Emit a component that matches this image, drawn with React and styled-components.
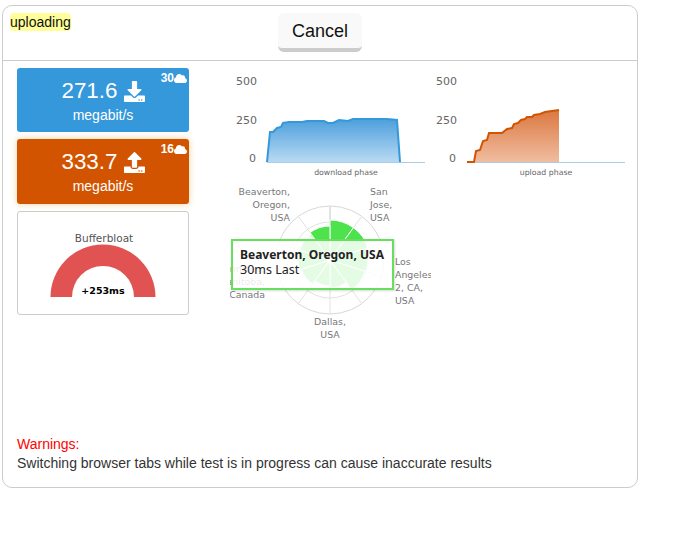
import React from 'react';
import styled, { createGlobalStyle } from 'styled-components';
import { FaDownload, FaUpload, FaCloud } from 'react-icons/fa';

const GlobalStyle = createGlobalStyle`
  body {
    margin: 0;
    background: #fff;
    font-family: 'Liberation Sans', Arial, sans-serif;
    font-size: 14px;
    color: #333;
  }
`;

const chartFont = "'DejaVu Sans', Verdana, sans-serif";

const Panel = styled.div`
  box-sizing: border-box;
  width: 636px;
  height: 483px;
  margin: 5px 0 0 2px;
  border: 1px solid #ccc;
  border-radius: 10px;
  display: flex;
  flex-direction: column;
`;

const Header = styled.header`
  box-sizing: border-box;
  height: 55px;
  flex: none;
  padding: 7px 7px 0;
  border-bottom: 1px solid #ccc;
  display: grid;
  grid-template-columns: 1fr auto 1fr;
  align-items: start;
`;

const Status = styled.span`
  justify-self: start;
  background: #ffff99;
  border-radius: 4px;
  line-height: 18px;
  color: #111;
`;

const CancelButton = styled.button`
  box-sizing: border-box;
  width: 84px;
  height: 39px;
  border: none;
  border-bottom: 4px solid #ccc;
  border-radius: 6px;
  background: #f9f9f9;
  font-family: inherit;
  font-size: 18px;
  color: #111;
  padding: 2px 0 0;
`;

const Body = styled.main`
  display: flex;
  gap: 41px;
  padding: 7px 0 0 14px;
`;

const LeftColumn = styled.div`
  width: 172px;
  flex: none;
  display: flex;
  flex-direction: column;
  gap: 7px;
`;

const SpeedTile = styled.div`
  position: relative;
  height: ${props => props.$height}px;
  border-radius: 3px;
  background: ${props => props.$color};
  box-shadow: ${props => props.$glow ? '0 0 6px rgba(232, 190, 110, 0.7)' : 'none'};
  color: #fff;
  display: flex;
  flex-direction: column;
  align-items: center;
  padding-top: 10px;
  box-sizing: border-box;
`;

const SpeedRow = styled.div`
  display: flex;
  align-items: center;
  gap: 6px;
  font-size: 22.4px;
  line-height: 26px;
`;

const SpeedUnit = styled.div`
  line-height: 20px;
  margin-top: 1px;
`;

const StreamCount = styled.div`
  position: absolute;
  top: 3px;
  right: 2px;
  display: flex;
  align-items: center;
  font-size: 12px;
  font-weight: bold;
  line-height: 14px;
`;

const GaugeCard = styled.div`
  box-sizing: border-box;
  height: 104px;
  border: 1px solid #ccc;
  border-radius: 3px;
`;

const Drawing = styled.svg`
  display: block;
`;

const ChartsColumn = styled.div`
  display: flex;
  flex-direction: column;
  width: 400px;
`;

const ChartsRow = styled.div`
  display: flex;
`;

const RadarWrap = styled.div`
  position: relative;
  width: 201px;
  height: 165px;
`;

const Tooltip = styled.div`
  position: absolute;
  left: 1px;
  top: 59px;
  box-sizing: border-box;
  width: 163px;
  height: 51px;
  padding: 6px 7px;
  background: rgba(255, 255, 255, 0.85);
  border: 2px solid #66e05c;
  box-shadow: 1px 1px 2px rgba(0, 0, 0, 0.15);
  font-family: 'Noto Sans', ${chartFont};
  font-size: 12.5px;
  line-height: 15px;
  color: #222;

  &::before {
    content: '';
    position: absolute;
    left: 70px;
    top: -8px;
    border-left: 5px solid transparent;
    border-right: 7px solid transparent;
    border-bottom: 6px solid rgba(255, 255, 255, 0.9);
  }
`;

const TooltipTitle = styled.div`
  font-size: 12px;
  font-weight: bold;
  white-space: nowrap;
`;

const Warnings = styled.footer`
  margin-top: auto;
  padding: 0 0 14px 14px;
  line-height: 19px;
`;

const WarningTitle = styled.div`
  color: #f00;
`;

const downloadPoints = [[267, 162], [270, 132], [273, 132], [277, 128], [281, 127], [283, 123], [289, 122], [302, 122], [307, 121], [324, 121], [328, 123], [333, 123], [339, 120], [348, 121], [353, 119], [387, 119], [397, 120], [400, 162]];
const uploadPoints = [[467, 162], [474, 162], [476, 151], [480, 150], [483, 141], [487, 140], [489, 133], [502, 133], [507, 129], [512, 128], [514, 124], [518, 123], [521, 120], [525, 119], [527, 117], [532, 117], [534, 115], [540, 114], [545, 112], [559, 110], [559, 162]];

const AreaChart = ({ id, originX, points, line, top, bottom, label, stroke }) => {
  const path = points.map(p => p.join(',')).join(' ');
  const labelRight = originX + 27;
  const lastX = originX + 200;
  return (
    <Drawing width="200" height="112" viewBox={`${originX} 68 200 112`} fontFamily={chartFont}>
      <defs>
        <linearGradient id={id} x1="0" y1="0" x2="0" y2="1">
          <stop offset="0" stopColor={top} />
          <stop offset="1" stopColor={bottom} />
        </linearGradient>
      </defs>
      <polygon points={path} fill={`url(#${id})`} />
      <line x1={points[0][0]} y1="162.5" x2={lastX - 5} y2="162.5" stroke="#a9cde6" />
      <polyline points={stroke ? points.slice(0, -1).map(p => p.join(',')).join(' ') : path} fill="none" stroke={line} strokeWidth="2" />
      <g fontSize="11" fill="#666" textAnchor="end">
        <text x={labelRight} y="85">500</text>
        <text x={labelRight} y="124">250</text>
        <text x={labelRight - 1} y="162">0</text>
      </g>
      <text x={label.x} y="175" fontSize="7.8" fill="#666" textAnchor="middle">{label.text}</text>
    </Drawing>
  );
};

const polar = (r, deg) => {
  const a = (deg - 90) * Math.PI / 180;
  return [330 + r * Math.cos(a), 260 + r * Math.sin(a)];
};

const radii = [40, 40, 38, 37, 28, 26, 30, 32, 32, 34];

const RadarChart = () => (
  <Drawing width="201" height="165" viewBox="230 180 201 165" fontFamily={chartFont}>
    <circle cx="330" cy="260" r="54" fill="none" stroke="#d8d8d8" />
    <circle cx="330" cy="260" r="38" fill="none" stroke="#e2e2e2" />
    {[0, 36, 72, 108, 144, 180, 216, 252, 288, 324].map(d => {
      const [x, y] = polar(54, d);
      return <line key={d} x1="330" y1="260" x2={x} y2={y} stroke="#e2e2e2" strokeWidth={d === 0 ? 2 : 1} />;
    })}
    {radii.map((r, i) => {
      const [x1, y1] = polar(r, i * 36);
      const [x2, y2] = polar(r, (i + 1) * 36);
      return (
        <path
          key={i}
          d={`M330 260L${x1} ${y1}A${r} ${r} 0 0 1 ${x2} ${y2}Z`}
          fill="#4de34d"
          stroke="#fff"
          strokeWidth="1"
        />
      );
    })}
    <g fontSize="9.4" fill="#777">
      <g textAnchor="end">
        <text x="290" y="195">Beaverton,</text>
        <text x="290" y="208">Oregon,</text>
        <text x="290" y="221">USA</text>
        <text x="265" y="272">Winnipeg,</text>
        <text x="265" y="285">Manitoba,</text>
        <text x="265" y="298">Canada</text>
      </g>
      <text x="370" y="195">San</text>
      <text x="370" y="208">Jose,</text>
      <text x="370" y="221">USA</text>
      <text x="395" y="265">Los</text>
      <text x="395" y="278">Angeles</text>
      <text x="395" y="291">2, CA,</text>
      <text x="395" y="304">USA</text>
      <g textAnchor="middle">
        <text x="330" y="325">Dallas,</text>
        <text x="330" y="338">USA</text>
      </g>
    </g>
  </Drawing>
);

const BufferbloatGauge = () => (
  <Drawing width="170" height="102" viewBox="18 212 170 102" fontFamily={chartFont}>
    <text x="104" y="242" fontSize="10.5" fill="#555" textAnchor="middle">Bufferbloat</text>
    <path d="M50.5 297A52.5 52.5 0 0 1 155.5 297L134 297A31 31 0 0 0 72 297Z" fill="#e15353" />
    <text x="103" y="294" fontSize="9.5" fontWeight="bold" fill="#000" textAnchor="middle">+253ms</text>
  </Drawing>
);

const Speed = ({ value, Icon, count, color, height, glow }) => (
  <SpeedTile $color={color} $height={height} $glow={glow}>
    <SpeedRow>
      {value}
      <Icon size={21} />
    </SpeedRow>
    <SpeedUnit>megabit/s</SpeedUnit>
    <StreamCount>
      {count}
      <FaCloud size={13} />
    </StreamCount>
  </SpeedTile>
);

export default function App() {
  return (
    <>
      <GlobalStyle />
      <Panel>
        <Header>
          <Status>uploading</Status>
          <CancelButton>Cancel</CancelButton>
        </Header>
        <Body>
          <LeftColumn>
            <Speed value="271.6" Icon={FaDownload} count="30" color="#3498db" height={64} />
            <Speed value="333.7" Icon={FaUpload} count="16" color="#d35400" height={65} glow />
            <GaugeCard>
              <BufferbloatGauge />
            </GaugeCard>
          </LeftColumn>
          <ChartsColumn>
            <ChartsRow>
              <AreaChart
                id="dl"
                originX={230}
                points={downloadPoints}
                line="#3498db"
                top="#4d9fdc"
                bottom="#b8daf3"
                label={{ x: 346, text: 'download phase' }}
              />
              <AreaChart
                id="ul"
                originX={430}
                points={uploadPoints}
                line="#d35400"
                top="#db7840"
                bottom="#f0bda0"
                stroke
                label={{ x: 546, text: 'upload phase' }}
              />
            </ChartsRow>
            <RadarWrap>
              <RadarChart />
              <Tooltip>
                <TooltipTitle>Beaverton, Oregon, USA</TooltipTitle>
                <div>30ms Last</div>
              </Tooltip>
            </RadarWrap>
          </ChartsColumn>
        </Body>
        <Warnings>
          <WarningTitle>Warnings:</WarningTitle>
          Switching browser tabs while test is in progress can cause inaccurate results
        </Warnings>
      </Panel>
    </>
  );
}
